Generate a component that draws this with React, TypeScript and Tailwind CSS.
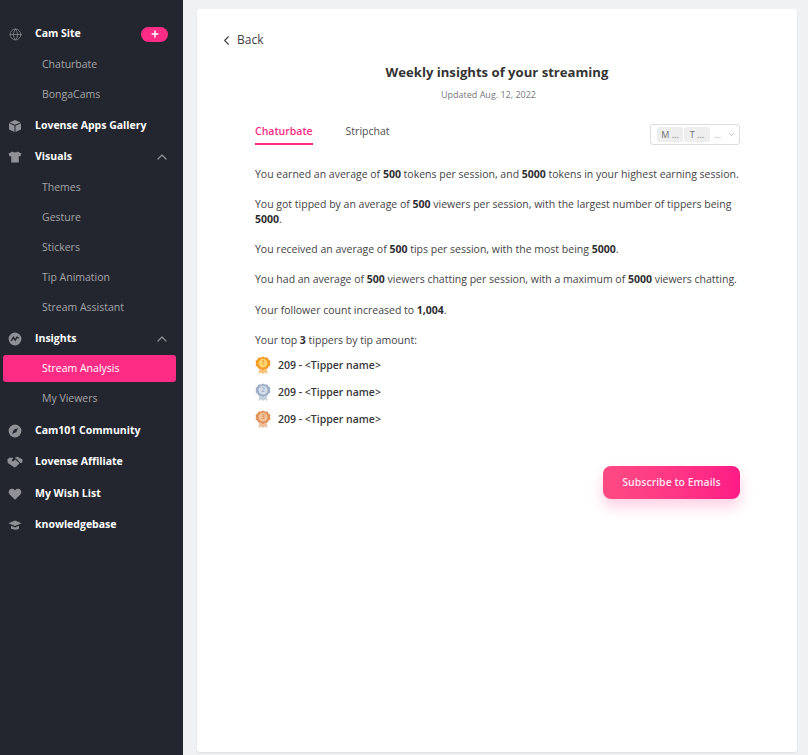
import { ChevronLeft, ChevronUp, ChevronDown, Globe, Plus } from 'lucide-react';
import type { ReactNode } from 'react';

const BoxIcon = () => (
  <svg width="14" height="14" viewBox="0 0 14 14" fill="#8f9196">
    <path d="M7 1 12.6 3.4 7 5.8 1.4 3.4Z" />
    <path d="M1 4.3 6.5 6.7V13L1 10.5Z" />
    <path d="M13 4.3 7.5 6.7V13L13 10.5Z" />
  </svg>
);

const ShirtIcon = () => (
  <svg width="14" height="14" viewBox="0 0 14 14" fill="#8f9196">
    <path d="M4.6 1.6C5.4 2.8 8.6 2.8 9.4 1.6L13.4 3.4 12.4 6.4 10.8 5.9V12.6H3.2V5.9L1.6 6.4.6 3.4Z" />
  </svg>
);

const InsightsIcon = () => (
  <svg width="14" height="14" viewBox="0 0 14 14">
    <circle cx="7" cy="7" r="6.4" fill="#8f9196" />
    <path d="M3.2 9 5.4 5.4 7.2 8.2 9 5.2 10.8 6.2" fill="none" stroke="#23262f" strokeWidth="1.4" />
  </svg>
);

const CompassIcon = () => (
  <svg width="14" height="14" viewBox="0 0 14 14">
    <circle cx="7" cy="7" r="6.4" fill="#8f9196" />
    <path d="M10 4 8.2 8.2 4 10 5.8 5.8Z" fill="#23262f" />
  </svg>
);

const HandshakeIcon = () => (
  <svg width="16" height="14" viewBox="0 0 16 14" fill="#8f9196">
    <path d="M.4 4.2 3 2.4 6.4 3 4.6 5.6 6 6.6 8.4 4.4 12.4 8.2 9.4 11.6 7.6 12.6 3 9.4.8 8Z" />
    <path d="M7.4 3 10.4 1.8 15.6 4.4 15.2 7.8 13.2 8 9.6 3.8Z" />
  </svg>
);

const HeartIcon = () => (
  <svg width="14" height="14" viewBox="0 0 14 14" fill="#8f9196">
    <path d="M7 12.8 1.6 7.4C0 5.6.6 2.4 3.4 1.8 5 1.5 6.2 2.2 7 3.4 7.8 2.2 9 1.5 10.6 1.8 13.4 2.4 14 5.6 12.4 7.4Z" />
  </svg>
);

const CapIcon = () => (
  <svg width="14" height="14" viewBox="0 0 14 14" fill="#8f9196">
    <path d="M7 2.4 13.6 5.2 7 8 .4 5.2Z" />
    <path d="M3 7.8 7 9.4 11 7.8V10.6C9.6 12.2 4.4 12.2 3 10.6Z" />
  </svg>
);

const Medal = ({ n, outer, inner }: { n: number; outer: string; inner: string }) => (
  <svg width="16" height="19" viewBox="0 0 16 19">
    <path d="M4.5 12 3.4 18 6 16.6 8 18 10 16.6 12.6 18 11.5 12Z" fill={outer} opacity="0.6" />
    <path
      d="M8 .4 10 1.6 12.4 1.6 13.6 3.6 15.4 5 15 7.2 15.4 9.4 13.6 10.8 12.4 12.8 10 12.8 8 14 6 12.8 3.6 12.8 2.4 10.8.6 9.4 1 7.2.6 5 2.4 3.6 3.6 1.6 6 1.6Z"
      fill={outer}
    />
    <circle cx="8" cy="7.2" r="4.4" fill={inner} />
    <text x="8" y="9.4" textAnchor="middle" fontSize="6.5" fontFamily="Open Sans, sans-serif" fill={outer}>
      {n}
    </text>
  </svg>
);

function TopItem({ icon, label, children }: { icon: ReactNode; label: string; children?: ReactNode }) {
  return (
    <div className="flex h-[31.5px] items-center pr-[15px]">
      <div className="flex w-[35px] shrink-0 justify-center pr-[5px]">{icon}</div>
      <span className="text-[10.5px] font-bold text-white">{label}</span>
      <div className="ml-auto flex items-center">{children}</div>
    </div>
  );
}

function SubItem({ label, active }: { label: string; active?: boolean }) {
  return (
    <div className="flex h-[30px] items-center px-[3px]">
      {active ? (
        <div className="mb-[2px] flex h-[27px] w-[173px] items-center rounded-[3px] bg-[#fe2c85] pt-[2px] pl-[39px] text-white">{label}</div>
      ) : (
        <div className="pl-[39px] text-[#a5a5a8]">{label}</div>
      )}
    </div>
  );
}

const Up = () => <ChevronUp size={16} strokeWidth={1.8} color="#8f9196" className="mr-[-2px]" />;

export default function App() {
  return (
    <div className="flex h-[755px] w-[808px] overflow-hidden bg-[#f0f1f3] font-['Open_Sans',sans-serif] text-[10.5px]">
      {/* Sidebar */}
      <aside className="h-full w-[183px] shrink-0 bg-[#23262f] pt-[18.25px]">
        <TopItem icon={<Globe size={13} strokeWidth={1.3} color="#8f9196" />} label="Cam Site">
          <div className="flex h-[15px] w-[27px] items-center justify-center rounded-full bg-[#fe2c85]">
            <Plus size={10} strokeWidth={3.5} color="#fff" />
          </div>
        </TopItem>
        <SubItem label="Chaturbate" />
        <SubItem label="BongaCams" />
        <TopItem icon={<BoxIcon />} label="Lovense Apps Gallery" />
        <TopItem icon={<ShirtIcon />} label="Visuals">
          <Up />
        </TopItem>
        <SubItem label="Themes" />
        <SubItem label="Gesture" />
        <SubItem label="Stickers" />
        <SubItem label="Tip Animation" />
        <SubItem label="Stream Assistant" />
        <TopItem icon={<InsightsIcon />} label="Insights">
          <Up />
        </TopItem>
        <SubItem label="Stream Analysis" active />
        <SubItem label="My Viewers" />
        <div className="pt-[0.5px]">
          <TopItem icon={<CompassIcon />} label="Cam101 Community" />
          <TopItem icon={<HandshakeIcon />} label="Lovense Affiliate" />
          <TopItem icon={<HeartIcon />} label="My Wish List" />
          <TopItem icon={<CapIcon />} label="knowledgebase" />
        </div>
      </aside>

      {/* Main card */}
      <main className="mt-[9px] mb-[3px] ml-[14px] w-[600px] rounded-[3px] bg-white shadow-[0_1px_2px_rgba(0,0,0,0.08)]">
        <div className="flex h-[39px] items-end pl-[22px] text-[12px] leading-[16px] text-[#404040]">
          <ChevronLeft size={15} strokeWidth={1.7} className="mb-[0.5px]" />
          <span className="ml-[3px]">Back</span>
        </div>

        <h1 className="mt-[12px] text-center text-[13.125px] leading-[24px] font-bold text-[#333333]">
          Weekly insights of your streaming
        </h1>
        <p className="mt-[4px] pr-[17px] text-center text-[9px] leading-[14px] text-[#77777a]">Updated Aug. 12, 2022</p>

        <div className="mr-[57px] ml-[58px] mt-[22px] flex items-start justify-between">
          <div className="flex gap-[33px]">
            <div className="h-[21px] border-b-2 border-[#fe2c85] font-semibold text-[#fe2c85]">Chaturbate</div>
            <div className="text-[#4d4d4f]">Stripchat</div>
          </div>
          <div className="flex h-[21px] w-[90px] items-center gap-[1px] rounded-[3px] border border-[#dcdcde] pl-[6px] text-[9px] text-[#8a8a8d]">
            <span className="flex h-[15px] w-[26px] items-center justify-center rounded-[2px] bg-[#eeeeef] text-[#707072]">M ...</span>
            <span className="flex h-[15px] w-[26px] items-center justify-center rounded-[2px] bg-[#eeeeef] text-[#707072]">T ...</span>
            <span className="ml-[3px] text-[#a9a9ab]">...</span>
            <ChevronDown size={9} color="#a9a9ab" className="ml-[5px]" />
          </div>
        </div>

        <div className="mr-[57px] ml-[58px] mt-[22px] text-[10.5px] leading-[15px] text-[#444446] [&_b]:text-[#2e2e30]">
          <p>
            You earned an average of <b>500</b> tokens per session, and <b>5000</b> tokens in your highest earning session.
          </p>
          <p className="mt-[15px]">
            You got tipped by an average of <b>500</b> viewers per session, with the largest number of tippers being <b>5000</b>.
          </p>
          <p className="mt-[15px]">
            You received an average of <b>500</b> tips per session, with the most being <b>5000</b>.
          </p>
          <p className="mt-[15px]">
            You had an average of <b>500</b> viewers chatting per session, with a maximum of <b>5000</b> viewers chatting.
          </p>
          <p className="mt-[15.5px]">
            Your follower count increased to <b>1,004</b>.
          </p>
          <p className="mt-[15.5px]">
            Your top <b>3</b> tippers by tip amount:
          </p>
          <div className="mt-[4px] flex flex-col font-semibold">
            <div className="flex h-[27px] items-center gap-[7px] text-[#38383a]">
              <Medal n={1} outer="#f59a23" inner="#fcd36e" />
              209 - &lt;Tipper name&gt;
            </div>
            <div className="flex h-[27px] items-center gap-[7px] text-[#38383a]">
              <Medal n={2} outer="#9fb0c6" inner="#d5deea" />
              209 - &lt;Tipper name&gt;
            </div>
            <div className="flex h-[27px] items-center gap-[7px] text-[#38383a]">
              <Medal n={3} outer="#e0935a" inner="#f3c49a" />
              209 - &lt;Tipper name&gt;
            </div>
          </div>
        </div>

        <div className="mr-[57px] mt-[33px] flex justify-end">
          <button className="h-[33px] w-[137px] rounded-[8px] bg-gradient-to-r from-[#fe4a83] to-[#fe1a86] text-[10.5px] font-semibold text-[#ffe4ef] shadow-[0_8px_14px_rgba(254,44,133,0.22)]">
            Subscribe to Emails
          </button>
        </div>
      </main>
    </div>
  );
}
